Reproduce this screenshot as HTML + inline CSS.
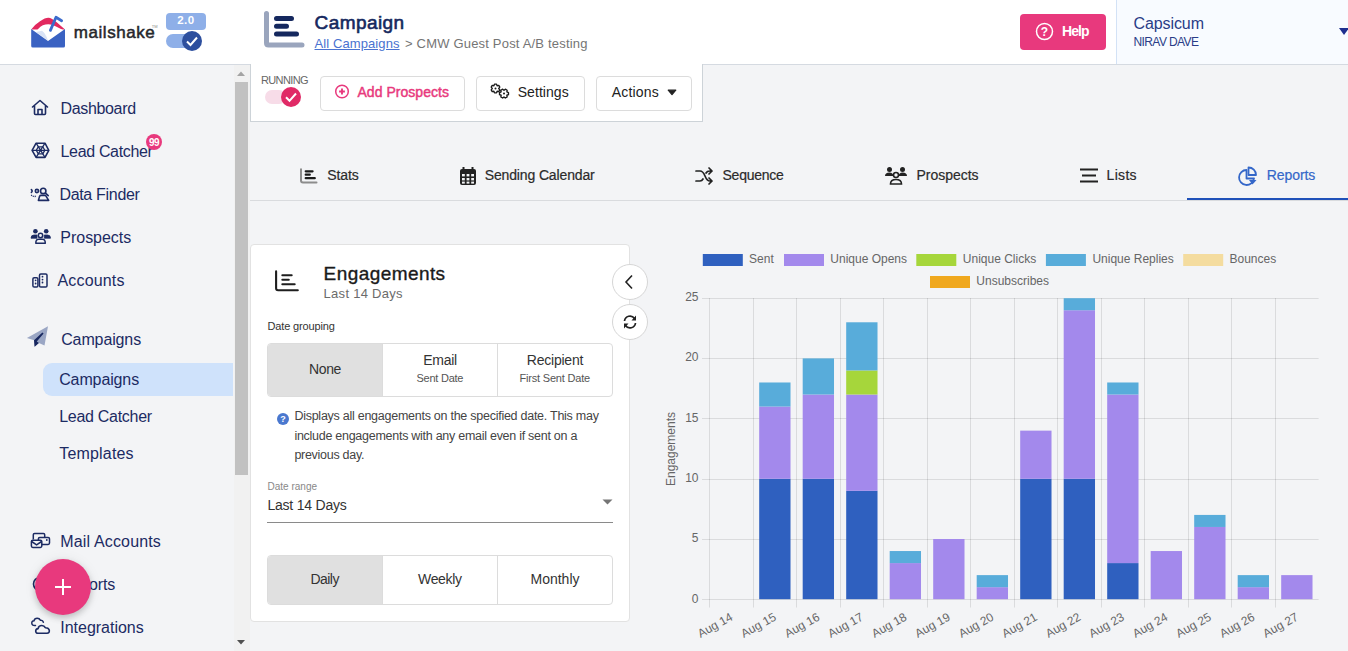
<!DOCTYPE html>
<html><head><meta charset="utf-8"><style>
html,body{margin:0;padding:0;}
body{width:1348px;height:651px;overflow:hidden;position:relative;background:#f3f4f6;font-family:"Liberation Sans",sans-serif;}
.t{position:absolute;line-height:1;white-space:nowrap;font-family:"Liberation Sans",sans-serif;}
svg{overflow:visible}
</style></head><body>
<div style="position:absolute;left:0px;top:0px;width:1348px;height:64px;background:#fff"></div>
<div style="position:absolute;left:0px;top:64px;width:1348px;height:1px;background:#d5dae1"></div>
<div style="position:absolute;left:1116px;top:0px;width:232px;height:64px;background:#f8fbff;border-left:1px solid #d3e2f6;box-sizing:border-box"></div>
<svg style="position:absolute;left:28px;top:12px;" width="40" height="38" viewBox="0 0 40 38">
<path d="M3.2 17.5 Q6 13 12 9.2 Q17.5 5.6 20.5 5.8 Q23.5 6 29 10.5 L37 17.5 Z" fill="#e2295f"/>
<path d="M8 20 Q12 13.5 17.5 12.6 Q22.5 11.5 27.5 14.2 L35 18 L20 29 Z" fill="#ffffff"/>
<path d="M8 20 L14 18.7 Q17.5 21 20 28.5 Z" fill="#d9e3f6"/>
<path d="M3.2 17 L20 29 L37 17 L37 34 Q37 35.6 35.4 35.6 L4.8 35.6 Q3.2 35.6 3.2 34 Z" fill="#3a62c2"/>
<path d="M22.4 18.4 L28 5.3 L33.6 8.8" fill="none" stroke="#3b6bcc" stroke-width="2.8" stroke-linecap="round" stroke-linejoin="round"/>
</svg>
<div class="t" style="left:73.8px;top:24.00px;font-size:17px;color:#26262b;letter-spacing:0.559px;-webkit-text-stroke:0.5px #26262b;">mailshake</div>
<div class="t" style="left:151.8px;top:25.00px;font-size:4px;color:#888;">TM</div>
<div style="position:absolute;left:166px;top:13px;width:40px;height:17px;background:#8eafe8;border-radius:4px"></div>
<div class="t" style="left:177.2px;top:15.00px;font-size:11.5px;color:#fff;font-weight:bold;letter-spacing:0.516px;">2.0</div>
<div style="position:absolute;left:166px;top:34px;width:34px;height:14px;background:#8eafe8;border-radius:7px"></div>
<svg style="position:absolute;left:181px;top:30px;" width="22" height="22" viewBox="0 0 22 22"><circle cx="11" cy="11" r="10" fill="#2d4f9e"/><path d="M6 11.5 L9.5 15 L16 7.5" fill="none" stroke="#fff" stroke-width="2"/></svg>
<svg style="position:absolute;left:262px;top:10px;" width="44" height="38" viewBox="0 0 44 38">
<path d="M4.5 3.5 L4.5 33 Q4.5 35 6.5 35 L40 35" fill="none" stroke="#9aa5bd" stroke-width="5" stroke-linecap="round" stroke-linejoin="round"/>
<path d="M14.5 8.5 L29.5 8.5 M14.5 16.3 L24.5 16.3 M14.5 24 L34.5 24" fill="none" stroke="#15285e" stroke-width="5" stroke-linecap="round"/>
</svg>
<div class="t" style="left:314.6px;top:13.00px;font-size:19px;color:#15285e;letter-spacing:0.417px;-webkit-text-stroke:0.6px #15285e;">Campaign</div>
<div class="t" style="left:314.5px;top:37.00px;font-size:13px;color:#4a72d0;letter-spacing:0.096px;text-decoration:underline;">All Campaigns</div>
<div class="t" style="left:405px;top:37.00px;font-size:13px;color:#757575;letter-spacing:0.188px;">&gt; CMW Guest Post A/B testing</div>
<div style="position:absolute;left:1020px;top:14px;width:86px;height:36px;background:#e8397d;border-radius:4px"></div>
<svg style="position:absolute;left:1035px;top:21.5px;" width="19" height="19" viewBox="0 0 19 19"><circle cx="9.5" cy="9.5" r="8" fill="none" stroke="#fff" stroke-width="1.5"/><text x="9.5" y="13.9" text-anchor="middle" font-family="Liberation Sans" font-weight="bold" font-size="12" fill="#fff">?</text></svg>
<div class="t" style="left:1062px;top:24.00px;font-size:14px;color:#fff;font-weight:bold;letter-spacing:-0.943px;">Help</div>
<div class="t" style="left:1133.5px;top:16.00px;font-size:16px;color:#2a3d87;letter-spacing:-0.096px;">Capsicum</div>
<div class="t" style="left:1133.5px;top:36.00px;font-size:12px;color:#2a3d87;letter-spacing:-0.599px;">NIRAV DAVE</div>
<svg style="position:absolute;left:1338px;top:27px;" width="11" height="9" viewBox="0 0 11 9"><path d="M1 1 L11 1 L6 8 Z" fill="#1e2f8f"/></svg>
<div style="position:absolute;left:0px;top:65px;width:234px;height:586px;background:#f3f4f6"></div>
<div style="position:absolute;left:234px;top:65px;width:16px;height:586px;background:#f1f1f1"></div>
<div style="position:absolute;left:235px;top:82px;width:13px;height:393px;background:#c1c1c1"></div>
<svg style="position:absolute;left:236px;top:70px;" width="10" height="8" viewBox="0 0 10 8"><path d="M1 6 L5 1.5 L9 6 Z" fill="#a3a3a3"/></svg>
<svg style="position:absolute;left:236px;top:638px;" width="10" height="8" viewBox="0 0 10 8"><path d="M1 2 L5 6.5 L9 2 Z" fill="#505050"/></svg>
<div class="t" style="left:60.5px;top:101.00px;font-size:16px;color:#1c2b63;letter-spacing:-0.341px;">Dashboard</div>
<div class="t" style="left:60.5px;top:144.00px;font-size:16px;color:#1c2b63;letter-spacing:-0.331px;">Lead Catcher</div>
<div class="t" style="left:59.4px;top:187.00px;font-size:16px;color:#1c2b63;letter-spacing:-0.307px;">Data Finder</div>
<div class="t" style="left:60.3px;top:230.00px;font-size:16px;color:#1c2b63;letter-spacing:-0.021px;">Prospects</div>
<div class="t" style="left:57.5px;top:273.00px;font-size:16px;color:#1c2b63;letter-spacing:0.165px;">Accounts</div>
<div class="t" style="left:61.2px;top:332.00px;font-size:16px;color:#1c2b63;letter-spacing:-0.123px;">Campaigns</div>
<div style="position:absolute;left:43px;top:363px;width:190px;height:33px;background:#cfe2fb;border-radius:9px 0 0 9px"></div>
<div class="t" style="left:59.2px;top:372.00px;font-size:16px;color:#1c2b63;letter-spacing:-0.123px;">Campaigns</div>
<div class="t" style="left:59.2px;top:409.00px;font-size:16px;color:#1c2b63;letter-spacing:-0.286px;">Lead Catcher</div>
<div class="t" style="left:59.2px;top:446.00px;font-size:16px;color:#1c2b63;letter-spacing:0.189px;">Templates</div>
<div class="t" style="left:60.3px;top:534.00px;font-size:16px;color:#1c2b63;letter-spacing:0.152px;">Mail Accounts</div>
<div class="t" style="left:60.3px;top:577.00px;font-size:16px;color:#1c2b63;letter-spacing:-0.177px;">Reports</div>
<div class="t" style="left:60.3px;top:620.00px;font-size:16px;color:#1c2b63;letter-spacing:-0.017px;">Integrations</div>
<svg style="position:absolute;left:31px;top:99px;" width="18" height="17" viewBox="0 0 18 17"><path d="M1.5 8 L9 1.5 L16.5 8 M3.5 6.5 L3.5 14.5 Q3.5 15.5 4.5 15.5 L13.5 15.5 Q14.5 15.5 14.5 14.5 L14.5 6.5 M7 15.5 L7 10.5 L11 10.5 L11 15.5" fill="none" stroke="#1c2b63" stroke-width="1.6" stroke-linejoin="round" stroke-linecap="round"/></svg>
<svg style="position:absolute;left:28px;top:138px;" width="24" height="24" viewBox="0 0 24 24"><path d="M8.1 5.2 L17 5.2 L20.8 12.3 L17 19.4 L8.1 19.4 L4.1 12.3 Z" fill="none" stroke="#1c2b63" stroke-width="1.6" stroke-linejoin="round" stroke-linecap="round"/><path d="M10.3 8.8 L14.8 8.8 L16.8 12.3 L14.8 15.8 L10.3 15.8 L8.3 12.3 Z" fill="none" stroke="#1c2b63" stroke-width="1.3"/><path d="M8.1 5.2 L17 19.4 M17 5.2 L8.1 19.4 M4.1 12.3 L20.8 12.3" fill="none" stroke="#1c2b63" stroke-width="1.3"/></svg>
<svg style="position:absolute;left:26px;top:183px;" width="28" height="22" viewBox="0 0 28 22"><circle cx="17.2" cy="7.9" r="2.7" fill="none" stroke="#1c2b63" stroke-width="1.6" stroke-linejoin="round" stroke-linecap="round"/><path d="M19.8 10.3 L22.2 12.6" fill="none" stroke="#1c2b63" stroke-width="1.6" stroke-linejoin="round" stroke-linecap="round"/><path d="M12.4 17.4 L13.6 13.3 Q14 12.4 15 12.4 L19.5 12.4 L22.7 17.4 Z" fill="none" stroke="#1c2b63" stroke-width="1.6" stroke-linejoin="round" stroke-linecap="round"/><circle cx="10.9" cy="8" r="1.6" fill="none" stroke="#1c2b63" stroke-width="1.6" stroke-linejoin="round" stroke-linecap="round"/><path d="M5.4 6.6 Q6.9 8 5.4 9.4" fill="none" stroke="#1c2b63" stroke-width="1.6" stroke-linejoin="round" stroke-linecap="round"/><path d="M5.3 11.8 Q6.8 14.3 10.8 13" fill="none" stroke="#1c2b63" stroke-width="1.4" stroke-dasharray="1.1 0.9"/></svg>
<svg style="position:absolute;left:27px;top:224px;" width="28" height="24" viewBox="0 0 28 24"><circle cx="8.4" cy="7.2" r="2.3" fill="#1c2b63"/><circle cx="19.2" cy="7.2" r="2.3" fill="#1c2b63"/><path d="M4 14.2 Q4 11 7 11 L10 11 L10 14.2 Z M17.3 14.2 L17.3 11 L20.5 11 Q23.5 11 23.5 14.2 Z" fill="#1c2b63" stroke="#1c2b63" stroke-width="0.8" stroke-linejoin="round"/><circle cx="13.5" cy="11.5" r="2.2" fill="none" stroke="#1c2b63" stroke-width="1.5"/><path d="M8.8 19.3 Q8.8 15.3 11.5 15.3 L15.5 15.3 Q18.3 15.3 18.3 19.3 Z" fill="none" stroke="#1c2b63" stroke-width="1.5" stroke-linejoin="round"/></svg>
<svg style="position:absolute;left:27px;top:268px;" width="24" height="24" viewBox="0 0 24 24"><rect x="5.9" y="9.7" width="5" height="9.3" rx="1.3" fill="none" stroke="#1c2b63" stroke-width="1.5"/><rect x="12.5" y="5.9" width="7.5" height="13.1" rx="1.3" fill="none" stroke="#1c2b63" stroke-width="1.5"/><g fill="#1c2b63"><circle cx="8.6" cy="12.3" r="0.9"/><circle cx="8.6" cy="15.5" r="0.9"/><circle cx="15.5" cy="8.7" r="0.9"/><circle cx="15.5" cy="11.6" r="0.9"/><circle cx="15.5" cy="14.5" r="0.9"/></g></svg>
<svg style="position:absolute;left:23px;top:322px;" width="28" height="28" viewBox="0 0 28 28"><path d="M3.9 15.9 L25 4.3 L21.5 23.4 L15.9 21 L11.6 24.7 L11.2 18.3 Z" fill="#9aa6c4"/><path d="M19.4 10.4 L20.6 11.5 L13.8 19.6 L15.9 21.1 L11.6 24.7 L11 18.2 Z" fill="#17275f"/></svg>
<svg style="position:absolute;left:27px;top:528px;" width="26" height="24" viewBox="0 0 26 24"><path d="M6.3 11.5 L6.3 6.8 Q6.3 5.5 7.6 5.5 L16.4 5.5 Q17.7 5.5 17.7 6.8 L17.7 9.4" fill="none" stroke="#1c2b63" stroke-width="1.5"/><rect x="11.4" y="9.4" width="11.1" height="7" rx="1.4" fill="none" stroke="#1c2b63" stroke-width="1.5"/><circle cx="19.8" cy="12" r="0.9" fill="#1c2b63"/><rect x="4.4" y="12.2" width="10.4" height="7.2" rx="1.4" fill="#f3f4f6" stroke="#1c2b63" stroke-width="1.5"/><path d="M4.6 13.5 L9.6 16.8 L14.6 13.5" fill="none" stroke="#1c2b63" stroke-width="1.5"/></svg>
<svg style="position:absolute;left:30px;top:576px;" width="20" height="16" viewBox="0 0 20 16"><circle cx="10" cy="8" r="6.5" fill="none" stroke="#1c2b63" stroke-width="1.6" stroke-linejoin="round" stroke-linecap="round"/></svg>
<svg style="position:absolute;left:27px;top:613px;" width="26" height="26" viewBox="0 0 26 26"><path d="M8.5 12.5 Q5 13 4.8 10.3 Q4.6 8 7 7.8 Q7.5 5.2 10.2 5.2 Q12.5 5.2 13.4 7.2 Q15.8 6.9 16.4 9.2" fill="none" stroke="#1c2b63" stroke-width="1.5" stroke-linecap="round"/><path d="M11 20.3 Q8.7 20.3 8.7 18 Q8.7 15.8 11.1 15.6 Q11.6 12.5 14.8 12.5 Q17.3 12.5 18.3 14.7 Q21.5 14.5 22.3 17.2 Q22.6 20.3 20 20.3 Z" fill="none" stroke="#1c2b63" stroke-width="1.6" stroke-linejoin="round"/></svg>
<div style="position:absolute;left:146px;top:134px;width:16px;height:16px;background:#e8397d;border-radius:50%"></div>
<div class="t" style="left:148.9px;top:138.00px;font-size:10px;color:#fff;font-weight:bold;letter-spacing:-0.525px;">99</div>
<div style="position:absolute;left:35px;top:559px;width:56px;height:56px;background:#e8397d;border-radius:50%;box-shadow:0 3px 6px rgba(0,0,0,0.2),0 0 14px rgba(0,0,0,0.06)"></div>
<div style="position:absolute;left:55px;top:586px;width:16px;height:2px;background:#fff"></div>
<div style="position:absolute;left:62px;top:579px;width:2px;height:16px;background:#fff"></div>
<div style="position:absolute;left:250px;top:65px;width:1098px;height:586px;background:#f3f4f6"></div>
<div style="position:absolute;left:250px;top:64px;width:453px;height:58px;background:#fff;border:1px solid #cdd3d8;border-top:none;box-sizing:border-box"></div>
<div class="t" style="left:261px;top:75.00px;font-size:11px;color:#666;letter-spacing:-0.635px;">RUNNING</div>
<div style="position:absolute;left:265px;top:90px;width:21px;height:14px;background:#f7dce8;border-radius:7px"></div>
<svg style="position:absolute;left:280px;top:86px;" width="22" height="22" viewBox="0 0 22 22"><circle cx="11" cy="11" r="10" fill="#e02a66"/><path d="M6 11.3 L9.5 14.8 L16 7.5" fill="none" stroke="#fff" stroke-width="2"/></svg>
<div style="position:absolute;left:319.5px;top:75.5px;width:145.5px;height:35px;background:#fff;border:1px solid #dcdcdc;border-radius:4px;box-sizing:border-box"></div>
<div style="position:absolute;left:475.5px;top:75.5px;width:109.5px;height:35px;background:#fff;border:1px solid #dcdcdc;border-radius:4px;box-sizing:border-box"></div>
<div style="position:absolute;left:595.5px;top:75.5px;width:96.5px;height:35px;background:#fff;border:1px solid #dcdcdc;border-radius:4px;box-sizing:border-box"></div>
<svg style="position:absolute;left:333px;top:82.5px;" width="18" height="18" viewBox="0 0 18 18"><circle cx="9" cy="8.5" r="6.3" fill="none" stroke="#e8397d" stroke-width="1.5"/><path d="M9 5.6 L9 11.4 M6.1 8.5 L11.9 8.5" stroke="#e8397d" stroke-width="1.9"/></svg>
<div class="t" style="left:357.5px;top:85.00px;font-size:14px;color:#e8397d;letter-spacing:0.031px;-webkit-text-stroke:0.45px #e8397d;">Add Prospects</div>
<svg style="position:absolute;left:485px;top:78px;" width="30" height="26" viewBox="0 0 30 26"><path d="M9.49 6.12 L11.51 6.12 L12.10 7.73 L13.79 7.43 L14.80 9.18 L13.70 10.50 L14.80 11.82 L13.79 13.57 L12.10 13.27 L11.51 14.88 L9.49 14.88 L8.90 13.27 L7.21 13.57 L6.20 11.82 L7.30 10.50 L6.20 9.18 L7.21 7.43 L8.90 7.73 Z M23.48 14.57 L23.48 16.63 L21.86 17.25 L22.14 18.96 L20.34 20.00 L19.00 18.90 L17.66 20.00 L15.86 18.96 L16.14 17.25 L14.52 16.63 L14.52 14.57 L16.14 13.95 L15.86 12.24 L17.66 11.20 L19.00 12.30 L20.34 11.20 L22.14 12.24 L21.86 13.95 Z" fill="none" stroke="#1a1a1a" stroke-width="1.35" stroke-linejoin="round"/><circle cx="10.5" cy="10.5" r="1" fill="#1a1a1a"/><circle cx="19" cy="15.6" r="1" fill="#1a1a1a"/></svg>
<div class="t" style="left:517.7px;top:85.00px;font-size:14px;color:#222;letter-spacing:0.060px;">Settings</div>
<div class="t" style="left:611.8px;top:85.00px;font-size:14px;color:#222;letter-spacing:0.182px;">Actions</div>
<svg style="position:absolute;left:667px;top:89px;" width="10" height="7" viewBox="0 0 10 7"><path d="M1.2 1.2 L8.8 1.2 L5 5.6 Z" fill="#222" stroke="#222" stroke-width="1.2" stroke-linejoin="round"/></svg>
<div style="position:absolute;left:250px;top:200px;width:1098px;height:1px;background:#d9dbde"></div>
<div style="position:absolute;left:1187px;top:198px;width:161px;height:2px;background:#1f51b9"></div>
<div class="t" style="left:327.3px;top:168.00px;font-size:14px;color:#2b2b2b;letter-spacing:-0.102px;-webkit-text-stroke:0.2px currentColor;">Stats</div>
<div class="t" style="left:484.7px;top:168.00px;font-size:14px;color:#2b2b2b;letter-spacing:-0.135px;-webkit-text-stroke:0.2px currentColor;">Sending Calendar</div>
<div class="t" style="left:722.5px;top:168.00px;font-size:14px;color:#2b2b2b;letter-spacing:-0.247px;-webkit-text-stroke:0.2px currentColor;">Sequence</div>
<div class="t" style="left:916.4px;top:168.00px;font-size:14px;color:#2b2b2b;letter-spacing:-0.004px;-webkit-text-stroke:0.2px currentColor;">Prospects</div>
<div class="t" style="left:1106.6px;top:168.00px;font-size:14px;color:#2b2b2b;letter-spacing:0.305px;-webkit-text-stroke:0.2px currentColor;">Lists</div>
<div class="t" style="left:1266.8px;top:168.00px;font-size:14px;color:#3467c9;letter-spacing:-0.083px;-webkit-text-stroke:0.2px currentColor;">Reports</div>
<svg style="position:absolute;left:296px;top:163px;" width="28" height="25" viewBox="0 0 28 25"><path d="M5 6.2 L5 17.6 Q5 19.6 7 19.6 L20.5 19.6" fill="none" stroke="#8c8c8c" stroke-width="2" stroke-linecap="round"/><path d="M9.7 8.3 L16.6 8.3 M9.7 11.7 L13.8 11.7 M9.7 15.2 L18.8 15.2" stroke="#1a1a1a" stroke-width="2.2" stroke-linecap="round"/></svg>
<svg style="position:absolute;left:459px;top:166px;" width="18" height="20" viewBox="0 0 18 20"><rect x="1" y="3" width="16" height="16" rx="2" fill="#222"/><path d="M4.5 1 L4.5 4 M13.5 1 L13.5 4" stroke="#222" stroke-width="2"/><g fill="#f3f4f6"><rect x="3" y="8" width="2.8" height="2.4"/><rect x="7.6" y="8" width="2.8" height="2.4"/><rect x="12.2" y="8" width="2.8" height="2.4"/><rect x="3" y="12" width="2.8" height="2.4"/><rect x="7.6" y="12" width="2.8" height="2.4"/><rect x="12.2" y="12" width="2.8" height="2.4"/><rect x="3" y="15.6" width="2.8" height="2"/><rect x="7.6" y="15.6" width="2.8" height="2"/><rect x="12.2" y="15.6" width="2.8" height="2"/></g></svg>
<svg style="position:absolute;left:695px;top:167px;" width="19" height="18" viewBox="0 0 19 18"><path d="M1 4 L5 4 Q8 4 10 9 Q12 14 15 14 L17 14 M1 14 L5 14 Q7 14 8 12 M11 6 Q12 4 15 4 L17 4 M14 1 L17 4 L14 7 M14 11 L17 14 L14 17" fill="none" stroke="#222" stroke-width="1.7" stroke-linecap="round" stroke-linejoin="round"/></svg>
<svg style="position:absolute;left:885px;top:166px;" width="22" height="19" viewBox="0 0 22 19"><circle cx="4.5" cy="3.5" r="2.5" fill="#222"/><circle cx="17.5" cy="3.5" r="2.5" fill="#222"/><path d="M0 10 Q0 6.5 4.5 6.5 Q8 6.5 8.5 10 Z M13.5 10 Q14 6.5 17.5 6.5 Q22 6.5 22 10 Z" fill="#222"/><circle cx="11" cy="9" r="2.5" fill="none" stroke="#222" stroke-width="1.6"/><path d="M5.5 18 Q5.5 13.5 11 13.5 Q16.5 13.5 16.5 18 Z" fill="none" stroke="#222" stroke-width="1.6"/></svg>
<svg style="position:absolute;left:1079px;top:168px;" width="20" height="16" viewBox="0 0 20 16"><path d="M1 1.5 L19 1.5 M3 7.5 L17 7.5 M1 13.5 L19 13.5" stroke="#222" stroke-width="1.8"/></svg>
<svg style="position:absolute;left:1238px;top:166px;" width="20" height="20" viewBox="0 0 20 20"><path d="M8.5 4 A7.5 7.5 0 1 0 16 12.5 L8.5 12.5 Z" fill="none" stroke="#3467c9" stroke-width="1.8" stroke-linejoin="round"/><path d="M10.5 1.5 A7.5 7.5 0 0 1 18 9 L10.5 9 Z" fill="none" stroke="#3467c9" stroke-width="1.8" stroke-linejoin="round"/><path d="M11 14 L18.5 14 L14.5 18.5 Z" fill="#3467c9"/></svg>
<div style="position:absolute;left:250px;top:244px;width:380px;height:378px;background:#fff;border:1px solid #e2e2e2;border-radius:4px;box-sizing:border-box"></div>
<svg style="position:absolute;left:270px;top:265px;" width="35" height="32" viewBox="0 0 35 32"><path d="M6.1 6.4 L6.1 23.3 Q6.1 25.3 8.1 25.3 L27.8 25.3" fill="none" stroke="#1e1e1e" stroke-width="2.1" stroke-linecap="round"/><path d="M12.3 10.2 L21.7 10.2 M12.3 14.7 L18.8 14.7 M12.3 19.3 L24.7 19.3" stroke="#1e1e1e" stroke-width="2" stroke-linecap="round"/></svg>
<div class="t" style="left:323.6px;top:264.00px;font-size:19px;color:#1a1a1a;letter-spacing:0.428px;font-weight:500;-webkit-text-stroke:0.35px #1a1a1a;">Engagements</div>
<div class="t" style="left:323.6px;top:287.00px;font-size:13px;color:#6b6b6b;letter-spacing:0.283px;">Last 14 Days</div>
<div class="t" style="left:267.5px;top:321.00px;font-size:11px;color:#333;letter-spacing:-0.138px;">Date grouping</div>
<div style="position:absolute;left:267px;top:343px;width:346px;height:54px;background:#fff;border:1px solid #dcdcdc;border-radius:4px;box-sizing:border-box"></div>
<div style="position:absolute;left:268px;top:344px;width:114px;height:52px;background:#e0e0e0;border-radius:3px 0 0 3px"></div>
<div style="position:absolute;left:382px;top:344px;width:1px;height:52px;background:#dcdcdc"></div>
<div style="position:absolute;left:497px;top:344px;width:1px;height:52px;background:#dcdcdc"></div>
<div class="t" style="left:309px;top:362.00px;font-size:14px;color:#333;letter-spacing:-0.384px;">None</div>
<div class="t" style="left:423.2px;top:353.00px;font-size:14px;color:#333;letter-spacing:-0.250px;">Email</div>
<div class="t" style="left:416.5px;top:373.00px;font-size:11px;color:#555;letter-spacing:-0.246px;">Sent Date</div>
<div class="t" style="left:526.8px;top:353.00px;font-size:14px;color:#333;letter-spacing:-0.230px;">Recipient</div>
<div class="t" style="left:519.5px;top:373.00px;font-size:11px;color:#555;letter-spacing:-0.193px;">First Sent Date</div>
<svg style="position:absolute;left:276px;top:412px;" width="14" height="14" viewBox="0 0 14 14"><circle cx="7" cy="7" r="6" fill="#4a78cf"/><text x="7" y="10.3" text-anchor="middle" font-family="Liberation Sans" font-weight="bold" font-size="9" fill="#fff">?</text></svg>
<div class="t" style="left:294.4px;top:410.00px;font-size:12.5px;color:#444;letter-spacing:-0.258px;">Displays all engagements on the specified date. This may</div>
<div class="t" style="left:294.4px;top:430.00px;font-size:12.5px;color:#444;letter-spacing:-0.269px;">include engagements with any email even if sent on a</div>
<div class="t" style="left:294.4px;top:449.00px;font-size:12.5px;color:#444;letter-spacing:-0.285px;">previous day.</div>
<div class="t" style="left:267.4px;top:482.00px;font-size:10px;color:#888;letter-spacing:0.024px;">Date range</div>
<div class="t" style="left:267.4px;top:498.00px;font-size:14px;color:#333;letter-spacing:-0.208px;">Last 14 Days</div>
<div style="position:absolute;left:267px;top:522px;width:346px;height:1px;background:#8a8a8a"></div>
<svg style="position:absolute;left:602px;top:499px;" width="11" height="6" viewBox="0 0 11 6"><path d="M0.5 0.5 L10.5 0.5 L5.5 5.5 Z" fill="#757575"/></svg>
<div style="position:absolute;left:267px;top:555px;width:346px;height:50px;background:#fff;border:1px solid #dcdcdc;border-radius:4px;box-sizing:border-box"></div>
<div style="position:absolute;left:268px;top:556px;width:114px;height:48px;background:#e0e0e0;border-radius:3px 0 0 3px"></div>
<div style="position:absolute;left:382px;top:556px;width:1px;height:48px;background:#dcdcdc"></div>
<div style="position:absolute;left:497px;top:556px;width:1px;height:48px;background:#dcdcdc"></div>
<div class="t" style="left:310.4px;top:572.00px;font-size:14px;color:#333;letter-spacing:-0.527px;">Daily</div>
<div class="t" style="left:418px;top:572.00px;font-size:14px;color:#333;letter-spacing:-0.328px;">Weekly</div>
<div class="t" style="left:530.5px;top:572.00px;font-size:14px;color:#333;letter-spacing:0.000px;">Monthly</div>
<div style="position:absolute;left:612px;top:264px;width:36px;height:36px;background:#fff;border:1px solid #d6d6d6;border-radius:50%;box-sizing:border-box"></div>
<svg style="position:absolute;left:624px;top:274px;" width="10" height="16" viewBox="0 0 10 16"><path d="M8 1.5 L2 8 L8 14.5" fill="none" stroke="#222" stroke-width="1.6"/></svg>
<div style="position:absolute;left:612px;top:304px;width:36px;height:36px;background:#fff;border:1px solid #d6d6d6;border-radius:50%;box-sizing:border-box"></div>
<svg style="position:absolute;left:621px;top:313px;" width="18" height="18" viewBox="0 0 18 18"><path d="M3.5 8 A5.5 5.5 0 0 1 13.5 5.5 M14.5 10 A5.5 5.5 0 0 1 4.5 12.5" fill="none" stroke="#222" stroke-width="1.7"/><path d="M15 2.5 L15 7.5 L10.5 7.5 Z M3 15.5 L3 10.5 L7.5 10.5 Z" fill="#222"/></svg>
<svg style="position:absolute;left:0;top:0" width="1348" height="651" viewBox="0 0 1348 651" font-family="Liberation Sans"><line x1="702" y1="599.5" x2="1318.6" y2="599.5" stroke="rgba(0,0,0,0.1)" stroke-width="1"/><text x="698.5" y="603" text-anchor="end" font-size="12" fill="#666">0</text><line x1="702" y1="539.5" x2="1318.6" y2="539.5" stroke="rgba(0,0,0,0.1)" stroke-width="1"/><text x="698.5" y="542" text-anchor="end" font-size="12" fill="#666">5</text><line x1="702" y1="479.5" x2="1318.6" y2="479.5" stroke="rgba(0,0,0,0.1)" stroke-width="1"/><text x="698.5" y="482" text-anchor="end" font-size="12" fill="#666">10</text><line x1="702" y1="418.5" x2="1318.6" y2="418.5" stroke="rgba(0,0,0,0.1)" stroke-width="1"/><text x="698.5" y="422" text-anchor="end" font-size="12" fill="#666">15</text><line x1="702" y1="358.5" x2="1318.6" y2="358.5" stroke="rgba(0,0,0,0.1)" stroke-width="1"/><text x="698.5" y="361" text-anchor="end" font-size="12" fill="#666">20</text><line x1="702" y1="298.5" x2="1318.6" y2="298.5" stroke="rgba(0,0,0,0.1)" stroke-width="1"/><text x="698.5" y="301" text-anchor="end" font-size="12" fill="#666">25</text><line x1="709.5" y1="298" x2="709.5" y2="607.5" stroke="rgba(0,0,0,0.1)" stroke-width="1"/><line x1="753.5" y1="298" x2="753.5" y2="607.5" stroke="rgba(0,0,0,0.1)" stroke-width="1"/><line x1="796.5" y1="298" x2="796.5" y2="607.5" stroke="rgba(0,0,0,0.1)" stroke-width="1"/><line x1="840.5" y1="298" x2="840.5" y2="607.5" stroke="rgba(0,0,0,0.1)" stroke-width="1"/><line x1="883.5" y1="298" x2="883.5" y2="607.5" stroke="rgba(0,0,0,0.1)" stroke-width="1"/><line x1="927.5" y1="298" x2="927.5" y2="607.5" stroke="rgba(0,0,0,0.1)" stroke-width="1"/><line x1="970.5" y1="298" x2="970.5" y2="607.5" stroke="rgba(0,0,0,0.1)" stroke-width="1"/><line x1="1014.5" y1="298" x2="1014.5" y2="607.5" stroke="rgba(0,0,0,0.1)" stroke-width="1"/><line x1="1057.5" y1="298" x2="1057.5" y2="607.5" stroke="rgba(0,0,0,0.1)" stroke-width="1"/><line x1="1101.5" y1="298" x2="1101.5" y2="607.5" stroke="rgba(0,0,0,0.1)" stroke-width="1"/><line x1="1144.5" y1="298" x2="1144.5" y2="607.5" stroke="rgba(0,0,0,0.1)" stroke-width="1"/><line x1="1188.5" y1="298" x2="1188.5" y2="607.5" stroke="rgba(0,0,0,0.1)" stroke-width="1"/><line x1="1231.5" y1="298" x2="1231.5" y2="607.5" stroke="rgba(0,0,0,0.1)" stroke-width="1"/><line x1="1275.5" y1="298" x2="1275.5" y2="607.5" stroke="rgba(0,0,0,0.1)" stroke-width="1"/><rect x="759.19" y="478.80" width="31.32" height="120.40" fill="#2f60bf"/><rect x="759.19" y="406.56" width="31.32" height="72.24" fill="#a389ec"/><rect x="759.19" y="382.48" width="31.32" height="24.08" fill="#58acda"/><rect x="802.69" y="478.80" width="31.32" height="120.40" fill="#2f60bf"/><rect x="802.69" y="394.52" width="31.32" height="84.28" fill="#a389ec"/><rect x="802.69" y="358.40" width="31.32" height="36.12" fill="#58acda"/><rect x="846.19" y="490.84" width="31.32" height="108.36" fill="#2f60bf"/><rect x="846.19" y="394.52" width="31.32" height="96.32" fill="#a389ec"/><rect x="846.19" y="370.44" width="31.32" height="24.08" fill="#a6d63b"/><rect x="846.19" y="322.28" width="31.32" height="48.16" fill="#58acda"/><rect x="889.69" y="563.08" width="31.32" height="36.12" fill="#a389ec"/><rect x="889.69" y="551.04" width="31.32" height="12.04" fill="#58acda"/><rect x="933.19" y="539.00" width="31.32" height="60.20" fill="#a389ec"/><rect x="976.69" y="587.16" width="31.32" height="12.04" fill="#a389ec"/><rect x="976.69" y="575.12" width="31.32" height="12.04" fill="#58acda"/><rect x="1020.19" y="478.80" width="31.32" height="120.40" fill="#2f60bf"/><rect x="1020.19" y="430.64" width="31.32" height="48.16" fill="#a389ec"/><rect x="1063.69" y="478.80" width="31.32" height="120.40" fill="#2f60bf"/><rect x="1063.69" y="310.24" width="31.32" height="168.56" fill="#a389ec"/><rect x="1063.69" y="298.20" width="31.32" height="12.04" fill="#58acda"/><rect x="1107.19" y="563.08" width="31.32" height="36.12" fill="#2f60bf"/><rect x="1107.19" y="394.52" width="31.32" height="168.56" fill="#a389ec"/><rect x="1107.19" y="382.48" width="31.32" height="12.04" fill="#58acda"/><rect x="1150.69" y="551.04" width="31.32" height="48.16" fill="#a389ec"/><rect x="1194.19" y="526.96" width="31.32" height="72.24" fill="#a389ec"/><rect x="1194.19" y="514.92" width="31.32" height="12.04" fill="#58acda"/><rect x="1237.69" y="587.16" width="31.32" height="12.04" fill="#a389ec"/><rect x="1237.69" y="575.12" width="31.32" height="12.04" fill="#58acda"/><rect x="1281.19" y="575.12" width="31.32" height="24.08" fill="#a389ec"/><text transform="translate(729.8,612.5) rotate(-29)" text-anchor="end" font-size="12" fill="#666" dy="8">Aug 14</text><text transform="translate(773.2,612.5) rotate(-29)" text-anchor="end" font-size="12" fill="#666" dy="8">Aug 15</text><text transform="translate(816.8,612.5) rotate(-29)" text-anchor="end" font-size="12" fill="#666" dy="8">Aug 16</text><text transform="translate(860.2,612.5) rotate(-29)" text-anchor="end" font-size="12" fill="#666" dy="8">Aug 17</text><text transform="translate(903.8,612.5) rotate(-29)" text-anchor="end" font-size="12" fill="#666" dy="8">Aug 18</text><text transform="translate(947.2,612.5) rotate(-29)" text-anchor="end" font-size="12" fill="#666" dy="8">Aug 19</text><text transform="translate(990.8,612.5) rotate(-29)" text-anchor="end" font-size="12" fill="#666" dy="8">Aug 20</text><text transform="translate(1034.2,612.5) rotate(-29)" text-anchor="end" font-size="12" fill="#666" dy="8">Aug 21</text><text transform="translate(1077.8,612.5) rotate(-29)" text-anchor="end" font-size="12" fill="#666" dy="8">Aug 22</text><text transform="translate(1121.2,612.5) rotate(-29)" text-anchor="end" font-size="12" fill="#666" dy="8">Aug 23</text><text transform="translate(1164.8,612.5) rotate(-29)" text-anchor="end" font-size="12" fill="#666" dy="8">Aug 24</text><text transform="translate(1208.2,612.5) rotate(-29)" text-anchor="end" font-size="12" fill="#666" dy="8">Aug 25</text><text transform="translate(1251.8,612.5) rotate(-29)" text-anchor="end" font-size="12" fill="#666" dy="8">Aug 26</text><text transform="translate(1295.2,612.5) rotate(-29)" text-anchor="end" font-size="12" fill="#666" dy="8">Aug 27</text><text transform="translate(675,449) rotate(-90)" text-anchor="middle" font-size="12" fill="#666">Engagements</text><rect x="702.8" y="254" width="40" height="12" fill="#2f60bf"/><text x="749.1" y="263.3" font-size="12" fill="#666">Sent</text><rect x="784" y="254" width="40" height="12" fill="#a389ec"/><text x="830.3" y="263.3" font-size="12" fill="#666">Unique Opens</text><rect x="916.3" y="254" width="40" height="12" fill="#a6d63b"/><text x="962.8" y="263.3" font-size="12" fill="#666">Unique Clicks</text><rect x="1045.9" y="254" width="40" height="12" fill="#58acda"/><text x="1092.4" y="263.3" font-size="12" fill="#666">Unique Replies</text><rect x="1183.2" y="254" width="40" height="12" fill="#f4dc9f"/><text x="1229.5" y="263.3" font-size="12" fill="#666">Bounces</text><rect x="930" y="276" width="40" height="12" fill="#f0a81e"/><text x="976.3" y="285.3" font-size="12" fill="#666">Unsubscribes</text></svg>
</body></html>
